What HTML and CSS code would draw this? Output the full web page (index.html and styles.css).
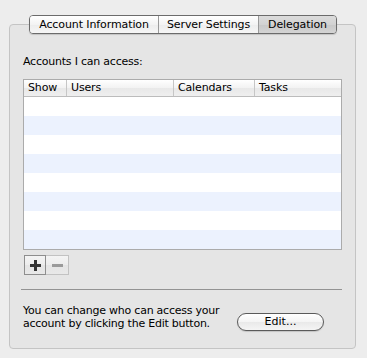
FILE: index.html
```html
<!DOCTYPE html>
<html>
<head>
<meta charset="utf-8">
<link rel="stylesheet" href="styles.css">
</head>
<body>
<div class="panel">
  <div class="tabs">
    <div class="tab tab-first">Account Information</div>
    <div class="tab">Server Settings</div>
    <div class="tab tab-last tab-selected">Delegation</div>
  </div>
  <div class="label">Accounts I can access:</div>
  <div class="table">
    <div class="thead">
      <div class="th c-show">Show</div>
      <div class="th c-users">Users</div>
      <div class="th c-cal">Calendars</div>
      <div class="th c-tasks">Tasks</div>
    </div>
    <div class="row"></div>
    <div class="row alt"></div>
    <div class="row"></div>
    <div class="row alt"></div>
    <div class="row"></div>
    <div class="row alt"></div>
    <div class="row"></div>
    <div class="row alt"></div>
  </div>
  <div class="pm">
    <div class="pm-btn pm-plus">
      <svg width="11" height="11" viewBox="0 0 11 11"><rect x="0" y="4" width="11" height="3" fill="#333"/><rect x="4" y="0" width="3" height="11" fill="#333"/></svg>
    </div>
    <div class="pm-btn pm-minus">
      <svg width="11" height="11" viewBox="0 0 11 11"><rect x="0" y="4" width="11" height="3" fill="#9a9a9a"/></svg>
    </div>
  </div>
  <div class="sep"></div>
  <div class="bottom">
    <div class="note">You can change who can access your<br>account by clicking the Edit button.</div>
    <div class="edit">Edit...</div>
  </div>
</div>
</body>
</html>
```
FILE: styles.css
```css
html, body {
  margin: 0;
  padding: 0;
}
body {
  background: #ededed;
  font-family: "DejaVu Sans", "Liberation Sans", sans-serif;
  font-size: 11px;
  color: #000;
  padding: 24px 11px 7px 9px;
  width: 347px;
}
.panel {
  background: #e5e5e5;
  border: 1px solid #c4c4c4;
  border-radius: 4px;
  padding: 0 13px 0 13px;
  height: 325px;
  box-sizing: border-box;
}
.tabs {
  display: flex;
  margin: -10px 0 0 6px;
  width: 308px;
  height: 19px;
  box-sizing: border-box;
  border: 1px solid #6b6b6b;
  border-radius: 4px;
  overflow: hidden;
  box-shadow: 0 1px 1px rgba(0,0,0,0.15);
}
.tab {
  display: flex;
  align-items: center;
  justify-content: center;
  background: linear-gradient(#ffffff, #f3f3f3 50%, #ececec 51%, #f6f6f6);
  border-right: 1px solid #9a9a9a;
  line-height: 17px;
  font-size: 11px;
  letter-spacing: -0.1px;
}
.tab-first { width: 128px; }
.tab:nth-child(2) { width: 99px; }
.tab-last { flex: 1; border-right: 0; }
.tab-selected {
  background: linear-gradient(#dcdcdc, #d2d2d2 50%, #c8c8c8 51%, #d4d4d4);
}
.label {
  margin-top: 21px;
  line-height: 14px;
  letter-spacing: -0.22px;
}
.table {
  margin-top: 10px;
  width: 319px;
  box-sizing: border-box;
  border: 1px solid #ababab;
  background: #fff;
}
.thead {
  display: flex;
  height: 16px;
  border-bottom: 1px solid #bcbcbc;
  background: linear-gradient(#ffffff, #f2f2f2 50%, #e8e8e8 51%, #efefef);
}
.th {
  line-height: 15px;
  padding-left: 4px;
  border-right: 1px solid #c6c6c6;
  box-sizing: border-box;
  letter-spacing: -0.15px;
}
.c-show { width: 43px; }
.c-users { width: 107px; }
.c-cal { width: 81px; }
.c-tasks { flex: 1; border-right: 0; }
.row {
  height: 19px;
  background: #fff;
}
.row.alt {
  background: #ecf2fe;
}
.pm {
  display: flex;
  margin-top: 5px;
  margin-left: 1px;
}
.pm-btn {
  width: 22px;
  height: 20px;
  box-sizing: border-box;
  display: flex;
  align-items: center;
  justify-content: center;
  background: linear-gradient(#f4f4f4, #ececec 50%, #e4e4e4 51%, #e8e8e8);
}
.pm-plus {
  border: 1px solid #8e8e8e;
}
.pm-minus {
  width: 23px;
  border: 1px solid #c2c2c2;
  border-left: 0;
}
.sep {
  margin: 14px 0 0 -2px;
  height: 1px;
  width: 321px;
  background: #939393;
}
.bottom {
  display: flex;
  align-items: flex-start;
  margin-top: 14px;
}
.note {
  line-height: 13px;
  width: 214px;
  letter-spacing: -0.24px;
}
.edit {
  margin-top: 9px;
  width: 87px;
  height: 18px;
  box-sizing: border-box;
  border: 1px solid #5a5a5a;
  border-radius: 9px;
  background: linear-gradient(#ffffff, #f4f4f4 50%, #e9e9e9 51%, #f5f5f5);
  text-align: center;
  line-height: 16px;
  box-shadow: 0 1px 1px rgba(0,0,0,0.15);
}
```
